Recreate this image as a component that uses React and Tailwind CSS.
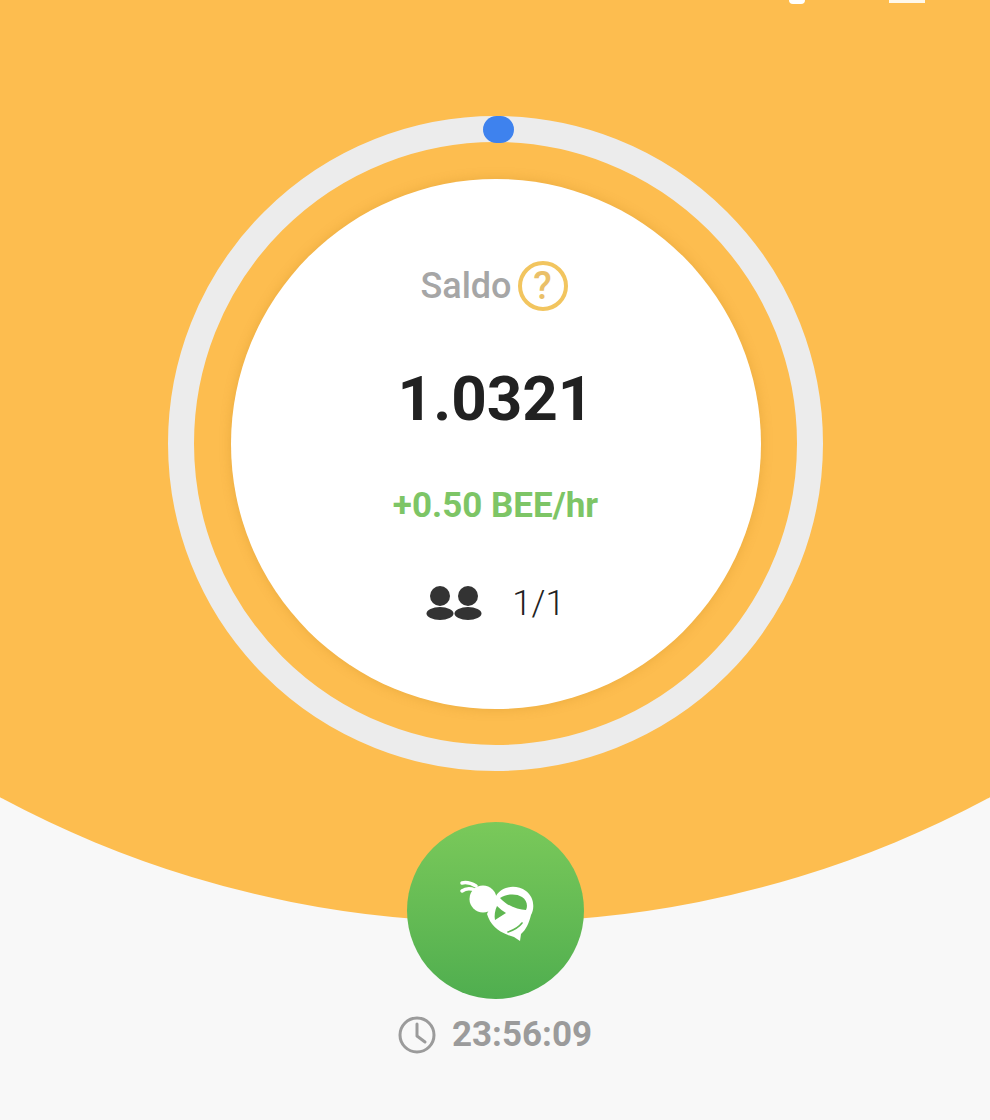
const BeeIcon = () => (
  <svg width="90" height="90" viewBox="0 0 90 90" fill="none">
    <path d="M26 20C21 17 16 16 12 17" stroke="#fff" strokeWidth="3.5" strokeLinecap="round" />
    <path d="M25 24C20 22 16 22 12 25" stroke="#fff" strokeWidth="3.5" strokeLinecap="round" />
    <circle cx="33" cy="33" r="13.5" fill="#fff" />
    <path d="M46 30C52 20 66 18 76 25C84 31 85 42 81 49C79 57 76 64 71 68L70 75L64 71C62 70 60 70 58 69C47 65 40 58 37 48C40 41 43 36 46 30Z" fill="#fff" />
    <path d="M50 32C56 28 66 27 72 31C77 34 78 40 76 44C68 44 57 40 50 32Z" fill="#5fb751" />
    <path d="M47 40C50 43 53 45 56 47L45 54C44 50 45 44 47 40Z" fill="#5fb751" />
    <path d="M58 66C64 64 69 61 72 57" stroke="#5fb751" strokeWidth="1.6" strokeLinecap="round" />
  </svg>
);

const PeopleIcon = () => (
  <svg width="56" height="36" viewBox="0 0 56 36" fill="#333">
    <circle cx="14" cy="10" r="10" />
    <circle cx="42" cy="10" r="10" />
    <ellipse cx="14" cy="27.5" rx="13.5" ry="6.5" />
    <ellipse cx="42" cy="27.5" rx="13.5" ry="6.5" />
  </svg>
);

const ClockIcon = () => (
  <svg width="38" height="38" viewBox="0 0 38 38" fill="none" stroke="#9b9b9b" strokeWidth="3" strokeLinecap="round" strokeLinejoin="round">
    <circle cx="19" cy="19" r="17" />
    <path d="M19 8V20L27 26" />
  </svg>
);

export default function App() {
  return (
    <div className="relative w-[990px] h-[1120px] overflow-hidden bg-[#f8f8f8] font-['Roboto',sans-serif]">
      {/* big yellow circle behind everything */}
      <div className="absolute left-[-550px] top-[-1168px] w-[2090px] h-[2090px] rounded-full bg-[#fdbd4f]"></div>

      <div className="relative flex flex-col items-center">
        {/* cropped status bar icons */}
        <div className="flex justify-end items-start w-full h-[4px] pr-[65px] gap-[84px]">
          <div className="w-[16px] h-[4px] rounded-b-full bg-white"></div>
          <div className="w-[36px] h-[3px] bg-[#fff8ea]"></div>
        </div>

        <div className="relative mt-[112px] ml-[1px] w-[655px] h-[655px] rounded-full border-[26px] border-[#ececec] flex items-center justify-center">
          <div className="absolute top-[-26px] left-[289px] w-[31px] h-[27px] rounded-full bg-[#3e82ee]"></div>
          <div className="w-[530px] h-[530px] rounded-full bg-white shadow-[0_0_12px_rgba(180,120,20,0.25)] flex flex-col items-center pt-[82px]">
            <div className="flex items-center gap-[6px] h-[50px] mr-[3px]">
              <span className="text-[36px] leading-none font-medium text-[#a6a6a6]">Saldo</span>
              <span className="w-[50px] h-[50px] rounded-full border-[4px] border-[#f2c55f] flex items-center justify-center text-[38px] leading-none font-medium text-[#eac069]">?</span>
            </div>
            <div className="mt-[52px] text-[62px] leading-[72px] font-bold text-[#212121]">1.0321</div>
            <div className="mt-[52px] text-[35px] leading-[38px] font-bold text-[#7dc566]">+0.50 BEE/hr</div>
            <div className="mt-[61px] flex items-center gap-[30px]">
              <PeopleIcon />
              <span className="text-[35px] leading-none font-light text-[#222]">1/1</span>
            </div>
          </div>
        </div>

        <button className="mt-[51px] w-[177px] h-[177px] rounded-full bg-gradient-to-b from-[#7ac95a] to-[#4fae4f] flex items-center justify-center">
          <BeeIcon />
        </button>

        <div className="mt-[16px] flex items-center gap-[16px] text-[35px] leading-[40px] font-bold text-[#9b9b9b]">
          <ClockIcon />
          <span>23:56:09</span>
        </div>
      </div>
    </div>
  );
}
